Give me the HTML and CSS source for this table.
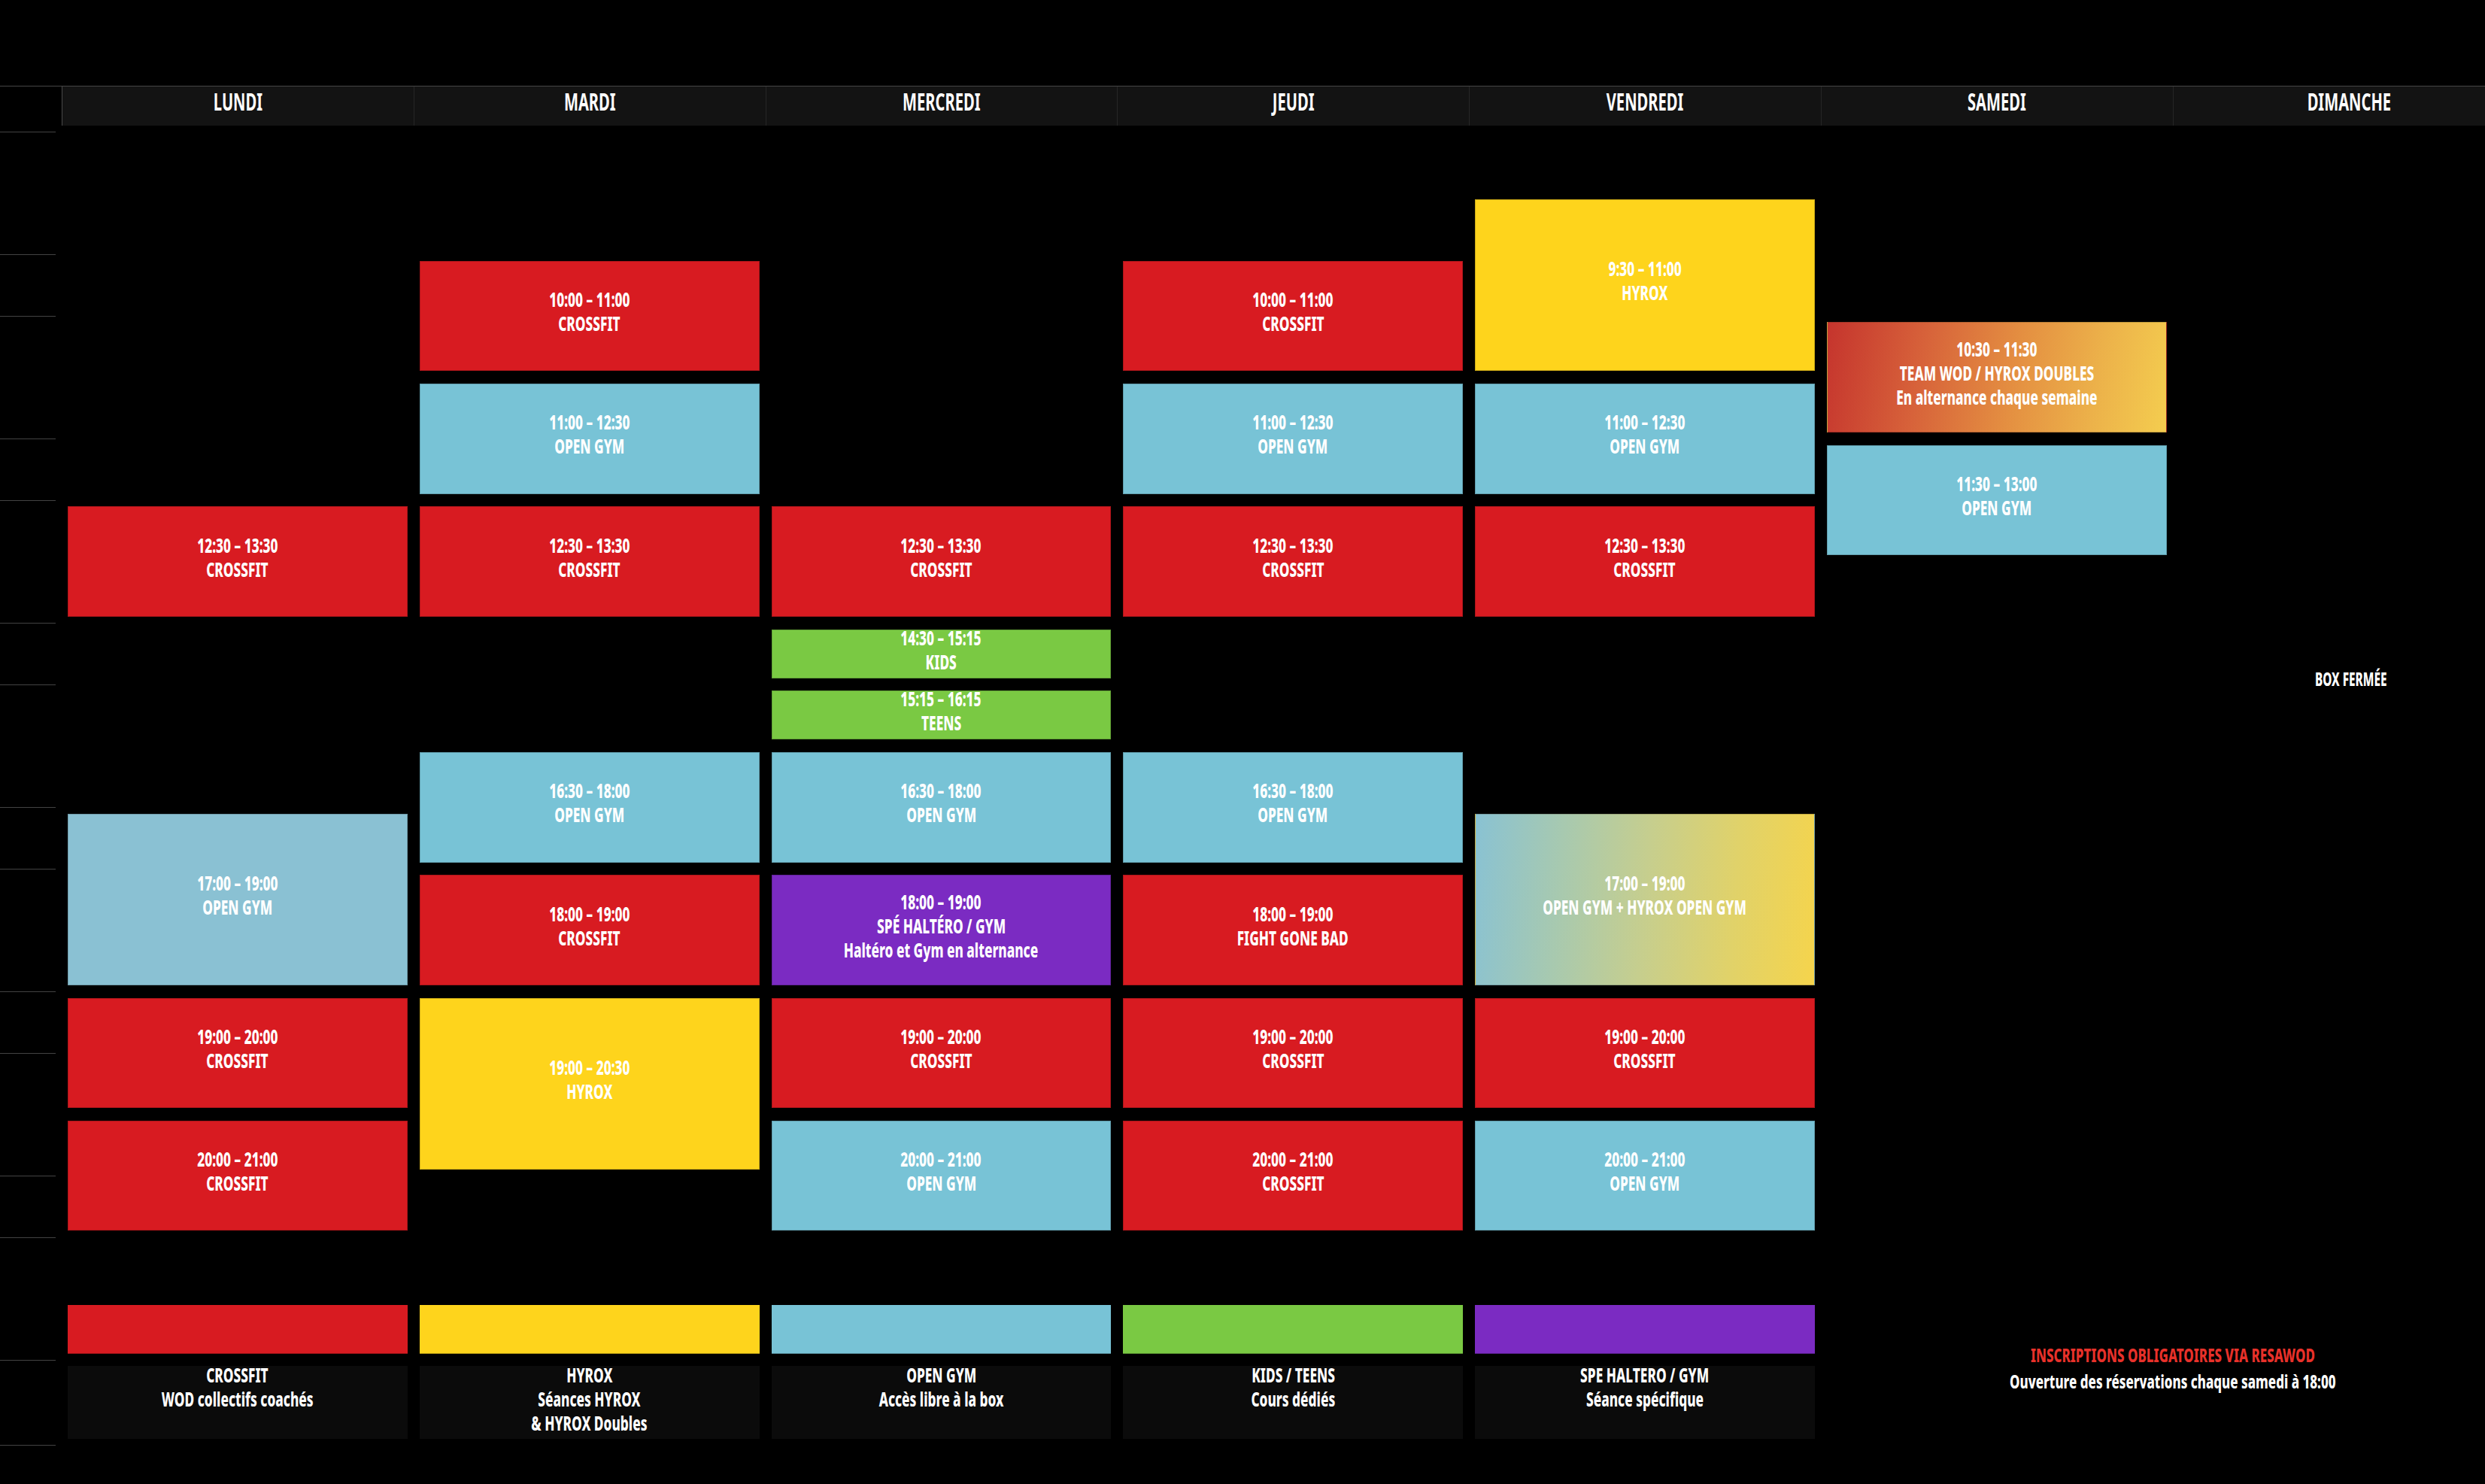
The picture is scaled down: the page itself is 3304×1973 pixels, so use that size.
FILE: index.html
```html
<!DOCTYPE html>
<html lang="fr">
<head>
<meta charset="utf-8">
<title>Planning</title>
<link rel="stylesheet" href="styles.css">
</head>
<body>
<div class="page">
  <div class="schedule">
    <div class="corner"></div>
    <div class="day c1"><span>LUNDI</span></div>
    <div class="day c2"><span>MARDI</span></div>
    <div class="day c3"><span>MERCREDI</span></div>
    <div class="day c4"><span>JEUDI</span></div>
    <div class="day c5"><span>VENDREDI</span></div>
    <div class="day c6"><span>SAMEDI</span></div>
    <div class="day c7"><span>DIMANCHE</span></div>

    <div class="tick r0"></div>
    <div class="tick r2"></div>
    <div class="tick r3"></div>
    <div class="tick r5"></div>
    <div class="tick r6"></div>
    <div class="tick r8"></div>
    <div class="tick r9"></div>
    <div class="tick r11"></div>
    <div class="tick r12"></div>
    <div class="tick r14"></div>
    <div class="tick r15"></div>
    <div class="tick r17"></div>
    <div class="tick r18"></div>
    <div class="tick r20 last"></div>

    <!-- LUNDI -->
    <div class="ev red c1 r6 s2"><span>12:30 – 13:30</span><span>CROSSFIT</span></div>
    <div class="ev pale c1 r11 s3"><span>17:00 – 19:00</span><span>OPEN GYM</span></div>
    <div class="ev red c1 r14 s2"><span>19:00 – 20:00</span><span>CROSSFIT</span></div>
    <div class="ev red c1 r16 s2"><span>20:00 – 21:00</span><span>CROSSFIT</span></div>

    <!-- MARDI -->
    <div class="ev red c2 r2 s2"><span>10:00 – 11:00</span><span>CROSSFIT</span></div>
    <div class="ev blue c2 r4 s2"><span>11:00 – 12:30</span><span>OPEN GYM</span></div>
    <div class="ev red c2 r6 s2"><span>12:30 – 13:30</span><span>CROSSFIT</span></div>
    <div class="ev blue c2 r10 s2"><span>16:30 – 18:00</span><span>OPEN GYM</span></div>
    <div class="ev red c2 r12 s2"><span>18:00 – 19:00</span><span>CROSSFIT</span></div>
    <div class="ev yellow c2 r14 s3"><span>19:00 – 20:30</span><span>HYROX</span></div>

    <!-- MERCREDI -->
    <div class="ev red c3 r6 s2"><span>12:30 – 13:30</span><span>CROSSFIT</span></div>
    <div class="ev green c3 r8 s1 tight"><span>14:30 – 15:15</span><span>KIDS</span></div>
    <div class="ev green c3 r9 s1 tight"><span>15:15 – 16:15</span><span>TEENS</span></div>
    <div class="ev blue c3 r10 s2"><span>16:30 – 18:00</span><span>OPEN GYM</span></div>
    <div class="ev purple c3 r12 s2"><span>18:00 – 19:00</span><span>SPÉ HALTÉRO / GYM</span><span>Haltéro et Gym en alternance</span></div>
    <div class="ev red c3 r14 s2"><span>19:00 – 20:00</span><span>CROSSFIT</span></div>
    <div class="ev blue c3 r16 s2"><span>20:00 – 21:00</span><span>OPEN GYM</span></div>

    <!-- JEUDI -->
    <div class="ev red c4 r2 s2"><span>10:00 – 11:00</span><span>CROSSFIT</span></div>
    <div class="ev blue c4 r4 s2"><span>11:00 – 12:30</span><span>OPEN GYM</span></div>
    <div class="ev red c4 r6 s2"><span>12:30 – 13:30</span><span>CROSSFIT</span></div>
    <div class="ev blue c4 r10 s2"><span>16:30 – 18:00</span><span>OPEN GYM</span></div>
    <div class="ev red c4 r12 s2"><span>18:00 – 19:00</span><span>FIGHT GONE BAD</span></div>
    <div class="ev red c4 r14 s2"><span>19:00 – 20:00</span><span>CROSSFIT</span></div>
    <div class="ev red c4 r16 s2"><span>20:00 – 21:00</span><span>CROSSFIT</span></div>

    <!-- VENDREDI -->
    <div class="ev yellow c5 r1 s3"><span>9:30 – 11:00</span><span>HYROX</span></div>
    <div class="ev blue c5 r4 s2"><span>11:00 – 12:30</span><span>OPEN GYM</span></div>
    <div class="ev red c5 r6 s2"><span>12:30 – 13:30</span><span>CROSSFIT</span></div>
    <div class="ev mix-gym c5 r11 s3"><span>17:00 – 19:00</span><span>OPEN GYM + HYROX OPEN GYM</span></div>
    <div class="ev red c5 r14 s2"><span>19:00 – 20:00</span><span>CROSSFIT</span></div>
    <div class="ev blue c5 r16 s2"><span>20:00 – 21:00</span><span>OPEN GYM</span></div>

    <!-- SAMEDI -->
    <div class="ev mix-team c6 r3 s2"><span>10:30 – 11:30</span><span>TEAM WOD / HYROX DOUBLES</span><span>En alternance chaque semaine</span></div>
    <div class="ev blue c6 r5 s2"><span>11:30 – 13:00</span><span>OPEN GYM</span></div>

    <!-- DIMANCHE -->
    <div class="closed c7 r0 s18"><span>BOX FERMÉE</span></div>

    <!-- LEGEND -->
    <div class="bar red c1 r19 s1"></div>
    <div class="bar yellow c2 r19 s1"></div>
    <div class="bar blue c3 r19 s1"></div>
    <div class="bar green c4 r19 s1"></div>
    <div class="bar purple c5 r19 s1"></div>

    <div class="legend c1 r20 s1"><div class="legend-in"><span>CROSSFIT</span><span>WOD collectifs coachés</span></div></div>
    <div class="legend c2 r20 s1"><div class="legend-in"><span>HYROX</span><span>Séances HYROX</span><span>&amp; HYROX Doubles</span></div></div>
    <div class="legend c3 r20 s1"><div class="legend-in"><span>OPEN GYM</span><span>Accès libre à la box</span></div></div>
    <div class="legend c4 r20 s1"><div class="legend-in"><span>KIDS / TEENS</span><span>Cours dédiés</span></div></div>
    <div class="legend c5 r20 s1"><div class="legend-in"><span>SPE HALTERO / GYM</span><span>Séance spécifique</span></div></div>

    <div class="note c67 r19 s2">
      <span class="note-red">INSCRIPTIONS OBLIGATOIRES VIA RESAWOD</span>
      <span class="note-white">Ouverture des réservations chaque samedi à 18:00</span>
    </div>
  </div>
</div>
</body>
</html>
```

FILE: styles.css
```css
html, body {
  margin: 0;
  padding: 0;
  background: #000;
  overflow: hidden;
}

body {
  font-family: "Noto Sans", "Liberation Sans", sans-serif;
  color: #fff;
}

.page {
  padding-top: 114px;
}

.schedule {
  display: grid;
  width: max-content;
  grid-template-columns: 82px repeat(7, 467.75px);
  grid-template-rows: 60px repeat(20, 81.66px) 113.66px;
  border-top: 1px solid #454545;
  min-width: 3304px;
}

.corner {
  grid-column: 1;
  grid-row: 1;
}

.day {
  grid-row: 1;
  height: 52px;
  background: #131313;
  border-left: 1px solid #262626;
  box-sizing: border-box;
  padding-top: 3px;
  display: flex;
  justify-content: center;
  align-items: flex-start;
  font-size: 33px;
  line-height: 34px;
  font-weight: 700;
}

.day span {
  display: block;
  white-space: nowrap;
  transform: scaleX(0.61);
}

.day.c1 {
  border-left-color: #4a4a4a;
}

/* columns */
.c1 { grid-column: 2; }
.c2 { grid-column: 3; }
.c3 { grid-column: 4; }
.c4 { grid-column: 5; }
.c5 { grid-column: 6; }
.c6 { grid-column: 7; }
.c7 { grid-column: 8; }
.c67 { grid-column: 7 / span 2; }

/* rows (r0 = first body row) */
.r0 { grid-row-start: 2; }
.r1 { grid-row-start: 3; }
.r2 { grid-row-start: 4; }
.r3 { grid-row-start: 5; }
.r4 { grid-row-start: 6; }
.r5 { grid-row-start: 7; }
.r6 { grid-row-start: 8; }
.r7 { grid-row-start: 9; }
.r8 { grid-row-start: 10; }
.r9 { grid-row-start: 11; }
.r10 { grid-row-start: 12; }
.r11 { grid-row-start: 13; }
.r12 { grid-row-start: 14; }
.r13 { grid-row-start: 15; }
.r14 { grid-row-start: 16; }
.r15 { grid-row-start: 17; }
.r16 { grid-row-start: 18; }
.r17 { grid-row-start: 19; }
.r18 { grid-row-start: 20; }
.r19 { grid-row-start: 21; }
.r20 { grid-row-start: 22; }

.s1 { grid-row-end: span 1; }
.s2 { grid-row-end: span 2; }
.s3 { grid-row-end: span 3; }
.s18 { grid-row-end: span 18; }

/* time column ticks */
.tick {
  grid-column: 1;
  width: 74px;
  border-top: 1px solid #434343;
}

.tick.last {
  border-bottom: 1px solid #434343;
}

/* events */
.ev {
  margin: 8.33px 8px;
  box-sizing: border-box;
  border: 1px solid rgba(0, 0, 0, 0.2);
  display: flex;
  flex-direction: column;
  justify-content: center;
  align-items: center;
  text-align: center;
  padding-bottom: 12px;
  font-size: 27px;
  line-height: 32px;
  font-weight: 800;
  color: #fff;
}

.ev.tight {
  padding-bottom: 0;
  justify-content: flex-start;
}

.ev.tight span:first-child {
  margin-top: -6px;
}

.ev span,
.legend-in span,
.note span,
.closed span {
  display: block;
  white-space: nowrap;
  transform: scaleX(0.64);
}

.red { background: #d81b21; }
.blue { background: #78c3d6; }
.pale { background: #8ac1d3; }
.yellow { background: #fed41c; }
.green { background: #7ac943; }
.purple { background: #7b2bc2; }

.mix-gym {
  background: linear-gradient(95deg, #89c2d3 0%, #a7c9b0 25%, #c6ce8e 50%, #e0d26a 75%, #f5d44c 100%);
}

.mix-team {
  background: linear-gradient(100deg, #c5342d 0%, #d7623a 28%, #e48f41 55%, #ecb14a 78%, #f4cd4f 100%);
}

.closed {
  display: flex;
  align-items: center;
  justify-content: center;
  padding-bottom: 14px;
  padding-left: 6px;
  box-sizing: border-box;
  font-size: 24px;
  line-height: 32px;
  font-weight: 800;
}

/* legend */
.bar {
  margin: 8.33px 8px;
  border-bottom: 1px solid rgba(0, 0, 0, 0.3);
  box-sizing: border-box;
}

.legend {
  margin: 8.33px 8px;
  background: #0b0b0b;
  display: flex;
  justify-content: center;
  font-size: 27px;
  line-height: 32px;
  font-weight: 800;
}

.legend-in {
  display: flex;
  flex-direction: column;
  align-items: center;
}

.legend-in span:first-child {
  margin-top: -4px;
}

.note {
  display: flex;
  flex-direction: column;
  align-items: center;
  justify-content: center;
  padding-bottom: 10px;
  box-sizing: border-box;
  text-align: center;
  font-size: 25px;
  line-height: 35px;
  font-weight: 800;
}

.note span {
  transform: scaleX(0.68);
}

.note-red {
  color: #e8312a;
}

.note-white {
  color: #fff;
}
```
